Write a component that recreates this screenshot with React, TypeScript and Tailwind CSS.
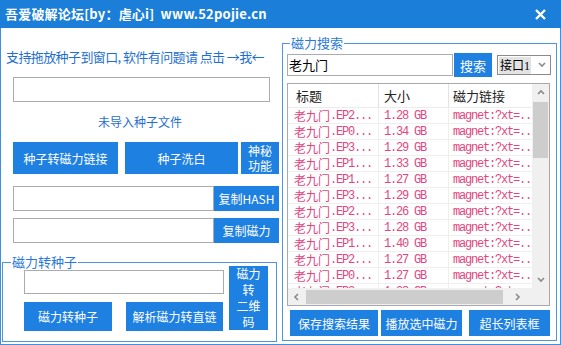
import React from "react";

const rows: [string, string][] = [
  ["EP2", "1.28"],
  ["EP0", "1.34"],
  ["EP3", "1.29"],
  ["EP1", "1.33"],
  ["EP1", "1.27"],
  ["EP3", "1.29"],
  ["EP2", "1.26"],
  ["EP3", "1.28"],
  ["EP1", "1.40"],
  ["EP2", "1.27"],
  ["EP0", "1.27"],
  ["EP3", "1.28"],
];

const cjk = "font-['Microsoft_YaHei','Noto_Sans_CJK_SC',sans-serif]";
const mono = "font-['Liberation_Mono',monospace] text-[12px] tracking-[-1.2px]";

const Btn = ({ className = "", children }: { className?: string; children: React.ReactNode }) => (
  <div className={`bg-[#1e80e0] text-white text-[12px] leading-[15px] flex items-center justify-center text-center shrink-0 ${className}`}>
    {children}
  </div>
);

const Box = ({ className = "" }: { className?: string }) => (
  <div className={`border border-[#ababab] bg-white shrink-0 ${className}`} />
);

const Chevron = ({ dir }: { dir: "up" | "down" | "left" | "right" }) => {
  const d = {
    up: "M1 5 L4 2 L7 5",
    down: "M1 2 L4 5 L7 2",
    left: "M5 1 L2 4 L5 7",
    right: "M2 1 L5 4 L2 7",
  }[dir];
  return (
    <svg width="8" height="8" viewBox="0 0 8 8">
      <path d={d} fill="none" stroke="#8a8a8a" strokeWidth="1.6" />
    </svg>
  );
};

export default function App() {
  return (
    <div className={`w-[561px] h-[345px] flex flex-col bg-white overflow-hidden ${cjk}`}>
      {/* title bar */}
      <div className="h-[28px] bg-[#1b7ed9] flex items-center justify-between pl-[5px] pr-[15px] text-white shrink-0">
        <span className="text-[13px] font-bold leading-[16px] whitespace-pre tracking-[0.2px]">吾爱破解论坛[by：虐心i]  www.52pojie.cn</span>
        <svg width="11" height="11" viewBox="0 0 11 11">
          <path d="M1 1 L10 10 M10 1 L1 10" stroke="#ffffff" strokeWidth="2.4" />
        </svg>
      </div>

      <div className="flex flex-1 border-x border-b border-[#3d8fe0]">
        {/* left column */}
        <div className="w-[279px] flex flex-col shrink-0">
          <div className="mt-[21px] pl-[5px] text-[13px] leading-[16px] text-[#1f6fd2] whitespace-pre tracking-[-0.6px]">
            支持拖放种子到窗口, 软件有问题请 点击 →我←
          </div>
          <Box className="ml-[12px] mt-[12px] w-[257px] h-[25px]" />
          <div className="mt-[12px] text-center text-[12px] leading-[16px] text-[#1f6fd2] pr-[1px]">未导入种子文件</div>
          <div className="mt-[12px] ml-[12px] flex h-[32px]">
            <Btn className="w-[105px] h-full">种子转磁力链接</Btn>
            <Btn className="ml-[7px] w-[113px] h-full">种子洗白</Btn>
            <Btn className="ml-[3px] w-[38px] h-full leading-[15px]">神秘<br />功能</Btn>
          </div>
          <div className="mt-[12px] ml-[12px] flex h-[25px]">
            <Box className="w-[201px] h-full" />
            <Btn className="w-[65px] h-full">复制HASH</Btn>
          </div>
          <div className="mt-[7px] ml-[12px] flex h-[25px]">
            <Box className="w-[201px] h-full" />
            <Btn className="w-[65px] h-full">复制磁力</Btn>
          </div>
          <div className="relative mt-[19px] ml-[1px] w-[275px] h-[80px] border border-[#4d95de] flex pl-[21px]">
            <span className="absolute left-[8px] top-[-9px] bg-white px-[1px] text-[13px] leading-[16px] text-[#2b78d8]">磁力转种子</span>
            <div className="flex flex-col">
              <Box className="mt-[7px] w-[200px] h-[24px]" />
              <div className="mt-[8px] flex h-[29px]">
                <Btn className="w-[88px] h-full">磁力转种子</Btn>
                <Btn className="ml-[14px] w-[97px] h-full">解析磁力转直链</Btn>
              </div>
            </div>
            <Btn className="ml-[5px] mt-[3px] w-[39px] h-[64px] leading-[16px]">
              磁力<br />转<br />二维<br />码
            </Btn>
          </div>
        </div>

        {/* right column */}
        <div className="flex-1 flex flex-col">
          <div className="relative mt-[15px] ml-[2px] w-[275px] h-[298px] border border-[#4d95de] flex flex-col pl-[4px]">
            <span className="absolute left-[7px] top-[-9px] bg-white px-[1px] text-[13px] leading-[16px] text-[#2b78d8]">磁力搜索</span>
            <div className="mt-[9px] flex items-center h-[24px]">
              <div className="w-[166px] h-[22px] border border-[#ababab] flex items-center pl-[1px] text-[13px] leading-[16px] text-black">老九门</div>
              <Btn className="ml-[1px] w-[38px] h-[24px] text-[13px]">搜索</Btn>
              <div className="ml-[5px] w-[54px] h-[20px] border border-[#8a8a8a] flex items-center pl-[1px] pr-[4px] justify-between">
                <span className="bg-[#e3e3e3] px-[1px] text-[12px] leading-[16px] text-black">接口<span className="font-['Liberation_Serif',serif]">1</span></span>
                <Chevron dir="down" />
              </div>
            </div>

            {/* table */}
            <div className="mt-[6px] w-[263px] h-[223px] border border-[#a9a9a9] flex flex-col">
              <div className="flex h-[204px]">
                <div className="flex-1 flex flex-col overflow-hidden">
                  <div className="h-[24px] flex shrink-0 border-b border-[#ececec] text-[13px] leading-[16px] text-[#222]">
                    <div className="w-[91px] border-r border-[#e3e3e3] pl-[8px] flex items-center">标题</div>
                    <div className="w-[70px] border-r border-[#e3e3e3] pl-[5px] flex items-center">大小</div>
                    <div className="flex-1 pl-[4px] flex items-center">磁力链接</div>
                  </div>
                  {rows.map(([ep, size], i) => (
                    <div key={i} className="h-[16px] flex shrink-0 border-b border-[#efefef] text-[#e2457e] whitespace-nowrap">
                      <div className="w-[91px] border-r border-[#efefef] pl-[6px] flex items-center">
                        <span className="text-[12px] leading-[14px]">老九门</span>
                        <span className={mono}>.{ep}...</span>
                      </div>
                      <div className={`w-[70px] border-r border-[#efefef] pl-[5px] flex items-center ${mono}`}>{size} GB</div>
                      <div className={`flex-1 pl-[4px] flex items-center overflow-hidden ${mono}`}>magnet:?xt=..</div>
                    </div>
                  ))}
                </div>
                <div className="w-[17px] bg-[#f0f0f0] flex flex-col items-center">
                  <div className="h-[17px] flex items-center justify-center"><Chevron dir="up" /></div>
                  <div className="mt-[1px] w-[15px] h-[56px] bg-[#cdcdcd]" />
                  <div className="flex-1" />
                  <div className="h-[17px] flex items-center justify-center"><Chevron dir="down" /></div>
                </div>
              </div>
              <div className="flex h-[17px]">
                <div className="flex-1 bg-[#f0f0f0] flex items-center">
                  <div className="w-[17px] flex justify-center"><Chevron dir="left" /></div>
                  <div className="ml-[1px] w-[197px] h-[14px] bg-[#cdcdcd]" />
                  <div className="flex-1 flex justify-center"><Chevron dir="right" /></div>
                </div>
                <div className="w-[17px] bg-[#f0f0f0]" />
              </div>
            </div>

            <div className="mt-[4px] flex h-[26px] pl-[3px]">
              <Btn className="w-[88px] h-full">保存搜索结果</Btn>
              <Btn className="ml-[3px] w-[81px] h-full">播放选中磁力</Btn>
              <Btn className="ml-[7px] w-[81px] h-full">超长列表框</Btn>
            </div>
          </div>
        </div>
      </div>
    </div>
  );
}
